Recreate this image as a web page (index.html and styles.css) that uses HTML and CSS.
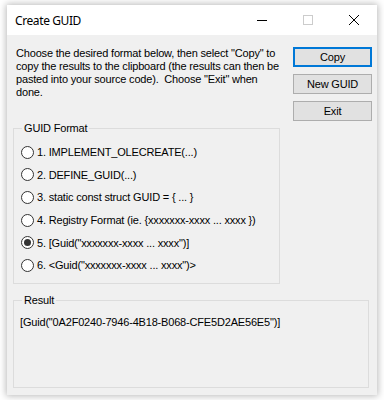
FILE: index.html
```html
<!DOCTYPE html>
<html>
<head>
<meta charset="utf-8">
<link rel="stylesheet" href="styles.css">
</head>
<body>
<div class="window">
  <div class="titlebar">
    <span class="title">Create GUID</span>
    <div class="caption">
      <span class="cap"><svg width="10" height="10" viewBox="0 0 10 10"><path d="M0 5.5H10" stroke="#000" stroke-width="1"/></svg></span>
      <span class="cap"><svg width="10" height="10" viewBox="0 0 10 10"><rect x="0.5" y="0.5" width="9" height="9" fill="none" stroke="#cccccc" stroke-width="1"/></svg></span>
      <span class="cap"><svg width="10" height="10" viewBox="0 0 10 10"><path d="M0 0L10 10M10 0L0 10" stroke="#000" stroke-width="1"/></svg></span>
    </div>
  </div>
  <div class="client">
    <div class="top">
      <p class="intro">Choose the desired format below, then select "Copy" to<br>copy the results to the clipboard (the results can then be<br>pasted into your source code).&nbsp; Choose "Exit" when<br>done.</p>
      <div class="buttons">
        <button class="btn default">Copy</button>
        <button class="btn">New GUID</button>
        <button class="btn">Exit</button>
      </div>
    </div>
    <div class="group format">
      <span class="group-label">GUID Format</span>
      <div class="radio"><span class="circle"></span>1. IMPLEMENT_OLECREATE(...)</div>
      <div class="radio"><span class="circle"></span>2. DEFINE_GUID(...)</div>
      <div class="radio"><span class="circle"></span>3. static const struct GUID = { ... }</div>
      <div class="radio"><span class="circle"></span>4. Registry Format (ie. {xxxxxxx-xxxx ... xxxx })</div>
      <div class="radio"><span class="circle checked"></span>5. [Guid("xxxxxxx-xxxx ... xxxx")]</div>
      <div class="radio"><span class="circle"></span>6. &lt;Guid("xxxxxxx-xxxx ... xxxx")&gt;</div>
    </div>
    <div class="group result">
      <span class="group-label">Result</span>
      <div class="result-text">[Guid("0A2F0240-7946-4B18-B068-CFE5D2AE56E5")]</div>
    </div>
  </div>
</div>
</body>
</html>
```
FILE: styles.css
```css
html, body {
  margin: 0;
  padding: 0;
  background: #ffffff;
}
body {
  padding: 5px 7px;
  font-family: "Liberation Sans", Arial, sans-serif;
  font-size: 11px;
  letter-spacing: -0.18px;
  color: #000;
}
.window {
  width: 370px;
  height: 390px;
  display: flex;
  flex-direction: column;
  background: #f0f0f0;
  box-shadow: 0 0 7px 1px rgba(0, 0, 0, 0.28);
}
.titlebar {
  height: 30px;
  background: #ffffff;
  display: flex;
  align-items: center;
  padding-left: 8px;
}
.title {
  font-family: "Noto Sans", sans-serif;
  font-size: 12px;
  letter-spacing: -0.4px;
  flex: 1;
}
.caption {
  display: flex;
  height: 30px;
}
.cap {
  width: 46px;
  height: 30px;
  display: flex;
  align-items: center;
  justify-content: center;
}
.cap svg {
  display: block;
}
.client {
  flex: 1;
  padding: 12px 8px 7px 6px;
  display: flex;
  flex-direction: column;
}
.top {
  display: flex;
  margin-bottom: 7px;
}
.intro {
  margin: 0;
  flex: 1;
  padding-left: 3px;
  line-height: 13px;
  white-space: nowrap;
}
.buttons {
  display: flex;
  flex-direction: column;
  gap: 7px;
  margin-right: -3px;
  width: 79px;
}
.btn {
  height: 20px;
  margin: 0;
  padding: 0;
  background: #e1e1e1;
  border: 1px solid #adadad;
  font-family: "Liberation Sans", Arial, sans-serif;
  font-size: 11px;
  letter-spacing: -0.18px;
  color: #000;
}
.btn.default {
  border: 2px solid #0078d7;
}
.group {
  position: relative;
  border: 1px solid #dcdcdc;
}
.group-label {
  position: absolute;
  left: 8px;
  top: -7px;
  padding: 0 2px;
  line-height: 13px;
  background: #f0f0f0;
}
.format {
  width: 267px;
  height: 156px;
  box-sizing: border-box;
  padding: 12px 0 0 7px;
  margin-bottom: 16px;
}
.radio {
  height: 22.6px;
  display: flex;
  align-items: center;
  white-space: nowrap;
}
.circle {
  width: 13px;
  height: 13px;
  box-sizing: border-box;
  border: 1px solid #333333;
  border-radius: 50%;
  background: #ffffff;
  margin-right: 3px;
  flex: none;
  display: flex;
  align-items: center;
  justify-content: center;
}
.circle.checked::after {
  content: "";
  width: 7px;
  height: 7px;
  border-radius: 50%;
  background: #333333;
}
.result {
  flex: 1;
  padding: 15px 6px 0 6px;
}
.result-text {
  line-height: 13px;
}
```
